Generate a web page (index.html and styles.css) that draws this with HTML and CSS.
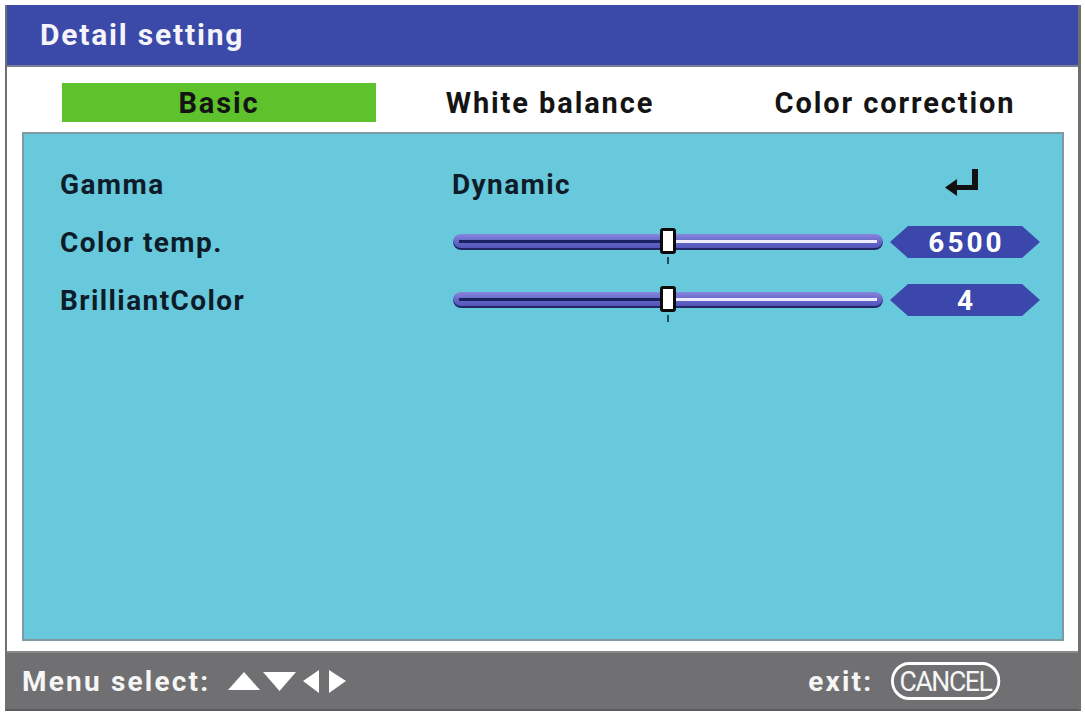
FILE: index.html
```html
<!DOCTYPE html>
<html>
<head>
<meta charset="utf-8">
<link rel="stylesheet" href="styles.css">
</head>
<body>
<div class="frame">
  <div class="header">Detail setting</div>
  <div class="body">
    <div class="tabs">
      <div class="tab active">Basic</div>
      <div class="tab">White balance</div>
      <div class="tab">Color correction</div>
    </div>
    <div class="panel">
      <div class="row">
        <div class="label">Gamma</div>
        <div class="mid">Dynamic</div>
        <div class="end">
          <svg class="enter" width="34" height="28" viewBox="0 0 34 28">
            <path d="M27 1 H33 V22 H11 V17 H27 Z" fill="#111"/>
            <path d="M0 19.5 L12 11 L12 28 Z" fill="#111"/>
          </svg>
        </div>
      </div>
      <div class="row">
        <div class="label">Color temp.</div>
        <div class="mid">
          <div class="track" style="--p:50%"><div class="thumb"></div></div>
        </div>
        <div class="end"><div class="badge">6500</div></div>
      </div>
      <div class="row">
        <div class="label">BrilliantColor</div>
        <div class="mid">
          <div class="track" style="--p:50%"><div class="thumb"></div></div>
        </div>
        <div class="end"><div class="badge">4</div></div>
      </div>
    </div>
  </div>
  <div class="footer">
    <div class="hint">Menu select:
      <svg class="arrows" width="120" height="30" viewBox="0 0 120 30">
        <path d="M0 24 L16 6 L32 24 Z" fill="#fff"/>
        <path d="M35 6 L68 6 L51.5 25 Z" fill="#fff"/>
        <path d="M75 15 L91 4 L91 27 Z" fill="#fff"/>
        <path d="M101 4 L118 15 L101 27 Z" fill="#fff"/>
      </svg>
    </div>
    <div class="exit">exit: <span class="cancel">CANCEL</span></div>
  </div>
</div>
</body>
</html>
```

FILE: styles.css
```css
html, body {
  margin: 0;
  padding: 0;
  background: #ffffff;
}
body {
  font-family: Roboto, "DejaVu Sans", sans-serif;
  font-weight: 700;
}
.frame {
  margin: 5px 0 0 5px;
  width: 1076px;
  height: 706px;
  box-sizing: border-box;
  display: flex;
  flex-direction: column;
  border-left: 2px solid #707070;
  border-right: 3px solid #707070;
  border-bottom: 2px solid #5a5a5c;
}
.header {
  height: 60px;
  background: #3b4aa8;
  color: #f4f4fa;
  font-size: 30px;
  letter-spacing: 1.8px;
  line-height: 60px;
  padding-left: 33px;
  flex: none;
  border-bottom: 2px solid #7a7f90;
}
.body {
  flex: 1;
  background: #ffffff;
  display: flex;
  flex-direction: column;
  padding: 0 14px 10px 15px;
}
.tabs {
  display: grid;
  grid-template-columns: 314px 348px 342px;
  padding: 16px 0 0 40px;
  height: 49px;
  font-size: 29px;
  color: #141414;
  letter-spacing: 1.9px;
}
.tab {
  height: 39px;
  line-height: 40px;
  text-align: center;
  white-space: nowrap;
}
.tab.active {
  background: #5dc22b;
}
.panel {
  flex: 1;
  background: #67c9db;
  border: 2px solid #7f9aa3;
  padding: 21px 22px 0 36px;
}
.row {
  display: grid;
  grid-template-columns: 392px 438px 150px;
  height: 58px;
  align-items: center;
  font-size: 28px;
  color: #0e1c2a;
  letter-spacing: 1.4px;
}
.mid {
  display: flex;
  align-items: center;
}
.end {
  display: flex;
  justify-content: center;
  align-items: center;
}
.enter {
  margin-left: -6px;
  margin-top: -4px;
}
.track {
  position: relative;
  width: 430px;
  height: 16px;
  border-radius: 8px;
  margin-left: 1px;
  background:
    linear-gradient(to right, #1b2160 var(--p), #eeeaff var(--p)) 6px 6px / calc(100% - 12px) 3px no-repeat,
    linear-gradient(#8886de, #6263c6 55%, #4d50b2);
  box-shadow: inset 0 -2px 0 #202566;
}
.thumb {
  position: absolute;
  left: var(--p);
  top: -6px;
  width: 10px;
  height: 20px;
  margin-left: -8px;
  background: #ffffff;
  border: 3px solid #0b0b0b;
  border-radius: 3px;
}
.thumb::after {
  content: "";
  position: absolute;
  left: 4px;
  top: 26px;
  width: 2px;
  height: 7px;
  background: #1f4d5c;
}
.badge {
  width: 150px;
  height: 32px;
  background: #3b47aa;
  clip-path: polygon(0 50%, 12% 0, 88% 0, 100% 50%, 88% 100%, 12% 100%);
  color: #ffffff;
  text-align: center;
  line-height: 33px;
  font-size: 28px;
  letter-spacing: 3px;
  text-indent: 3px;
}
.footer {
  height: 56px;
  flex: none;
  background: #707072;
  border-top: 2px solid #8a8a8c;
  display: flex;
  align-items: center;
  justify-content: space-between;
  padding: 0 72px 0 15px;
  color: #f6f6f6;
  font-size: 28px;
  letter-spacing: 2.2px;
}
.hint {
  display: flex;
  align-items: center;
}
.arrows {
  margin-left: 18px;
}
.exit {
  display: flex;
  align-items: center;
}
.cancel {
  margin-left: 18px;
  border: 3px solid #ffffff;
  border-radius: 19px;
  height: 32px;
  line-height: 33px;
  padding: 0 6px;
  font-weight: 400;
  font-size: 28px;
  letter-spacing: -1.5px;
  transform: scaleX(0.95);
  transform-origin: left center;
}
```
